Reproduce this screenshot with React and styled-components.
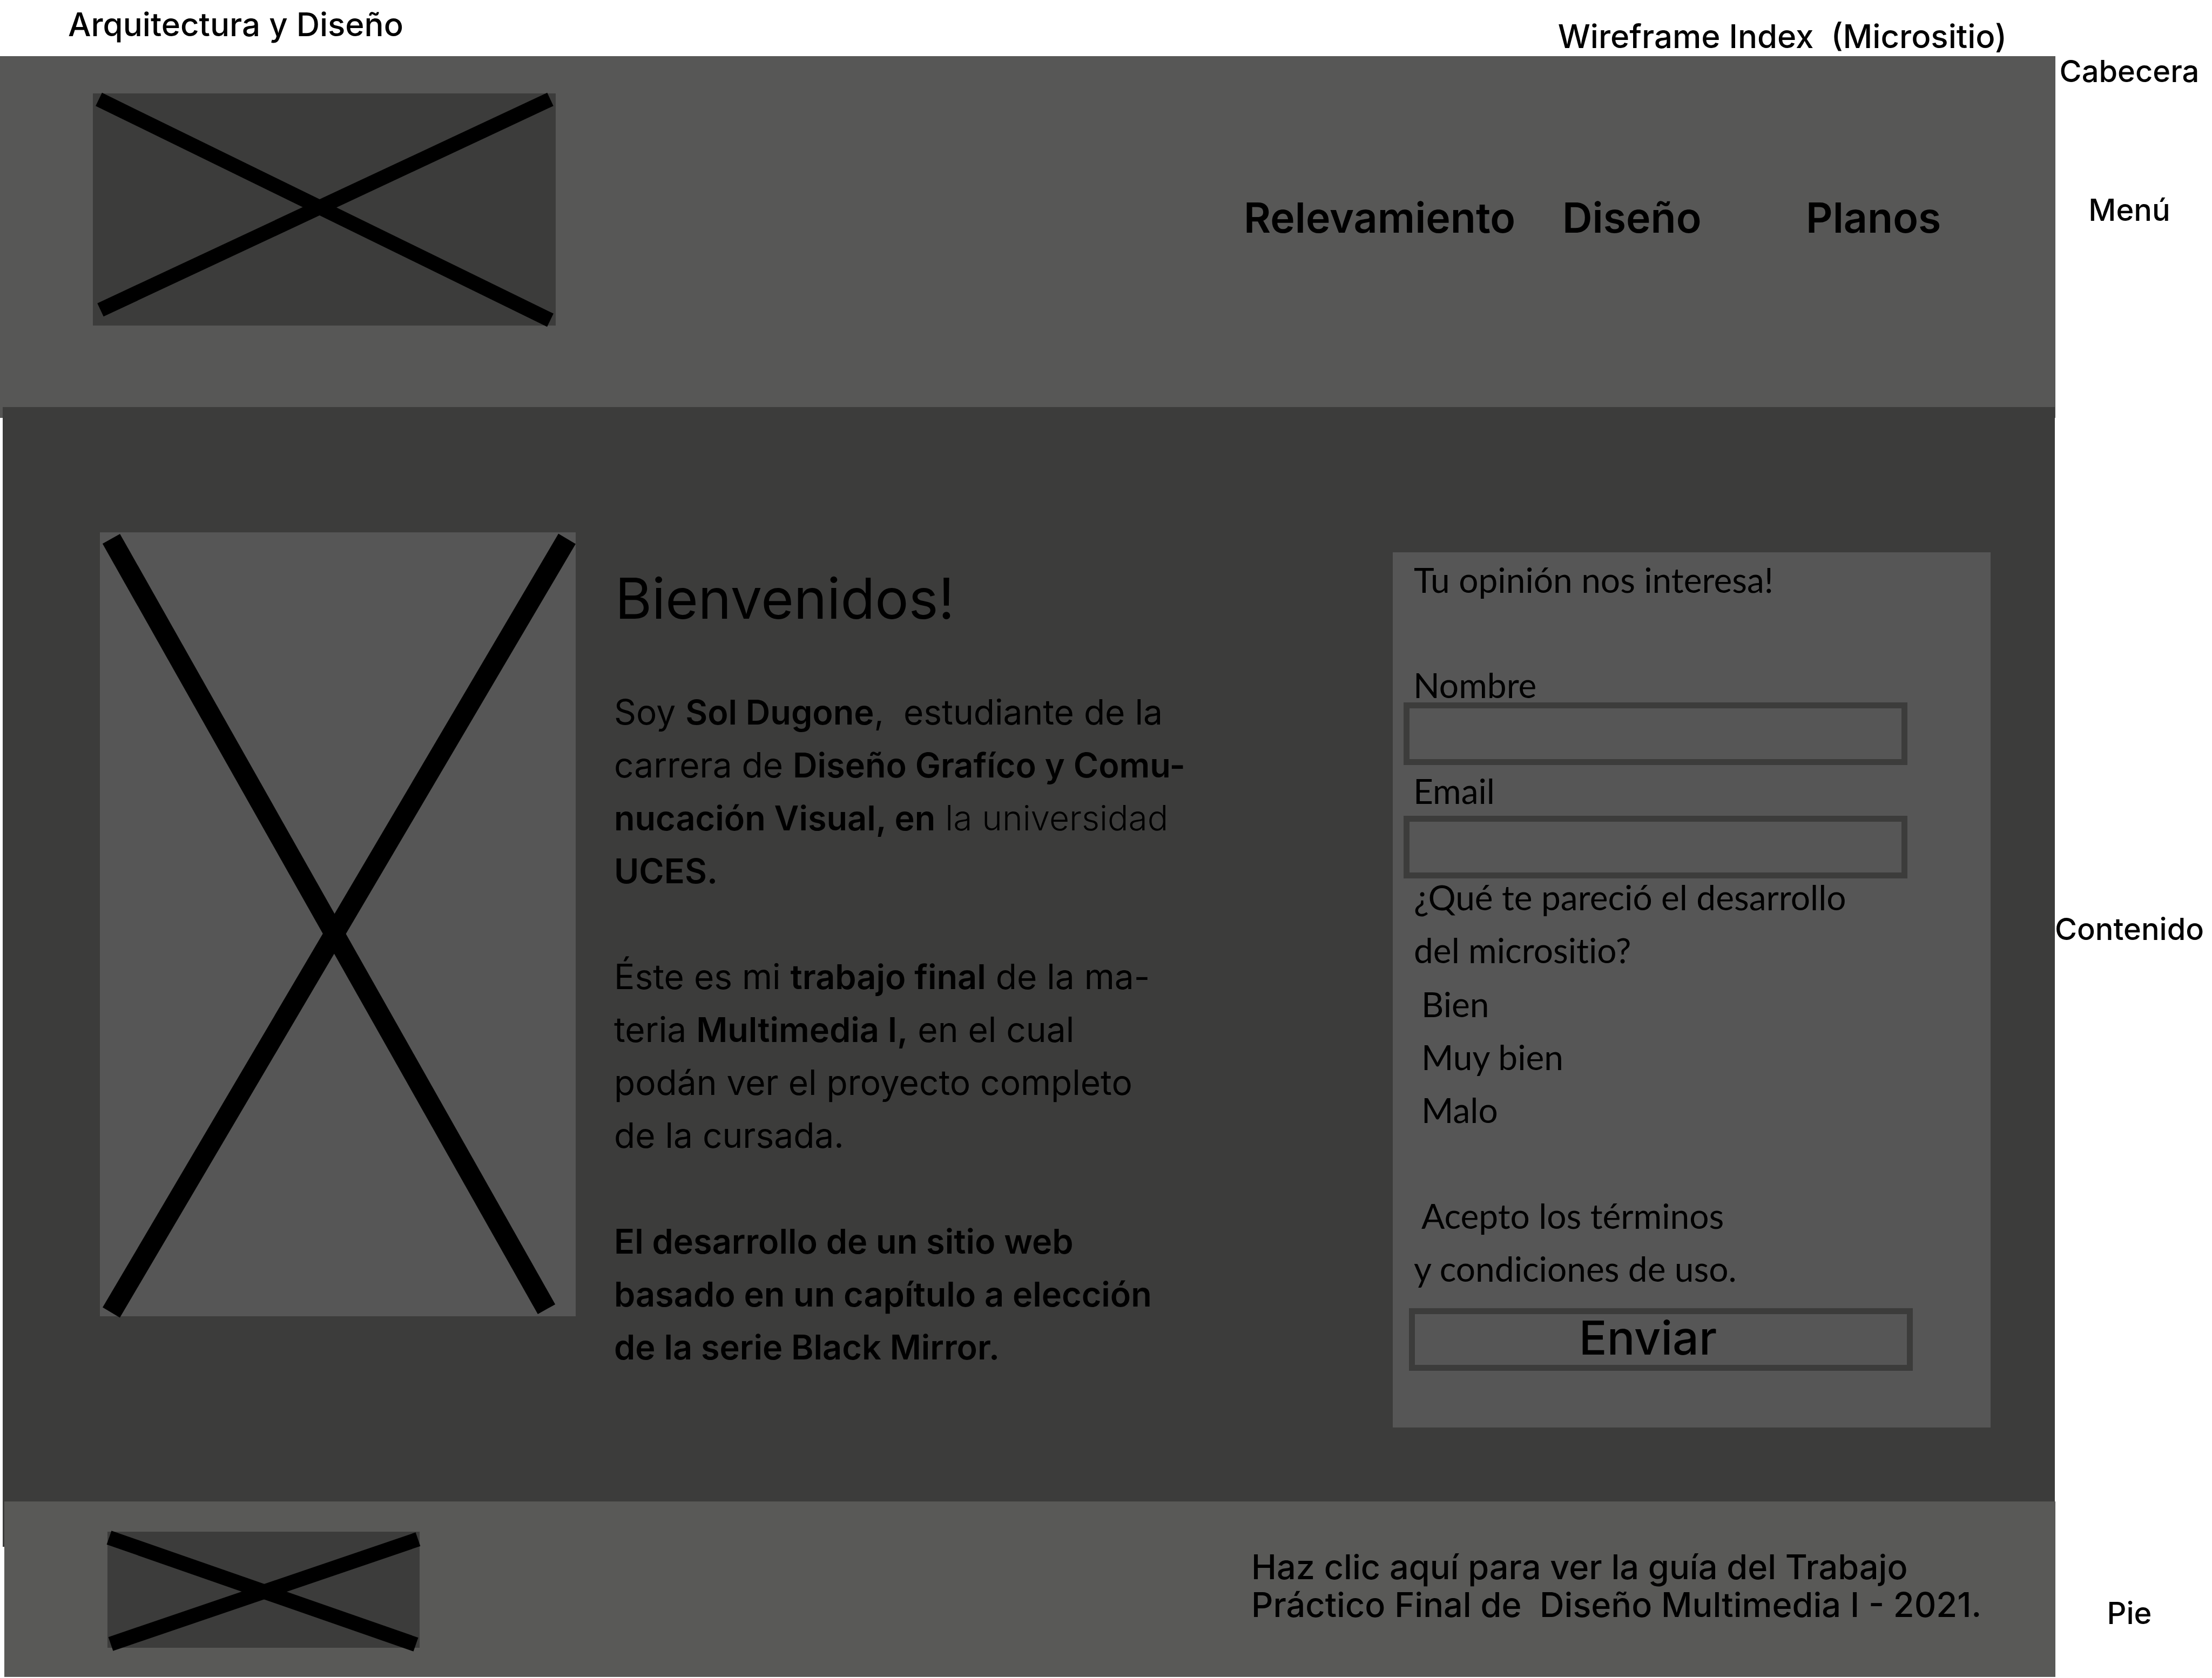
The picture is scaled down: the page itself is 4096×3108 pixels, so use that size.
import React from "react";
import styled, { createGlobalStyle } from "styled-components";

const GlobalStyle = createGlobalStyle`
  *, *::before, *::after { box-sizing: border-box; }
  body {
    margin: 0;
    background: #fff;
    color: #000;
    font-family: "Inter", "Liberation Sans", sans-serif;
  }
  h1, h2, p { margin: 0; }
`;

const TopBar = styled.div`
  display: flex;
  justify-content: space-between;
  height: 104px;
  padding: 8px 380px 0 126px;
`;

const TopTitle = styled.p`
  align-self: ${(p) => p.$align};
  font-size: 60px;
  font-weight: 500;
  line-height: 74px;
  white-space: pre;
`;

const Board = styled.div`
  display: grid;
  grid-template-columns: minmax(0, 1fr) 290px;
  padding-bottom: 2px;
`;

const Notes = styled.aside`
  display: flex;
  flex-direction: column;
  align-items: center;
  gap: 201px;
  padding: ${(p) => p.$top}px 16px 0 0;
`;

const Note = styled.p`
  font-size: 56px;
  font-weight: 500;
  line-height: 56px;
`;

const Header = styled.header`
  display: flex;
  justify-content: space-between;
  align-items: flex-start;
  margin-bottom: -20px;
  padding: 69px 0 171px 172px;
  background: #575756;
`;

const Nav = styled.nav`
  display: grid;
  grid-template-columns: 590px 451px 462px;
  padding-top: 184px;
`;

const NavLink = styled.a`
  justify-self: start;
  color: inherit;
  font-size: 77px;
  font-weight: 600;
  line-height: 92px;
  text-decoration: none;
`;

const Content = styled.main`
  display: flex;
  align-items: flex-start;
  gap: 71px;
  margin: 0 1px -84px 5px;
  padding: 232px 119px 221px 180px;
  background: #3c3c3b;
`;

const Picture = styled.svg`
  display: block;
  flex: none;
  overflow: visible;
  background: ${(p) => p.$fill};

  line {
    stroke: #000;
    stroke-width: ${(p) => p.$stroke}px;
  }
`;

const Intro = styled.article`
  padding-top: 60px;
`;

const Heading = styled.h1`
  margin-bottom: 100px;
  padding-left: 2px;
  font-size: 104px;
  font-weight: 400;
  line-height: 124px;
`;

const Paragraph = styled.p`
  font-size: 64px;
  line-height: 98px;
  white-space: nowrap;

  & + & { margin-top: 98px; }
  b {
    font-size: 63px;
    font-weight: 600;
  }
`;

const Light = styled.span`
  font-weight: 300;
`;

const Form = styled.form`
  display: flex;
  flex-direction: column;
  align-items: flex-start;
  width: 1107px;
  margin: 37px 0 0 auto;
  padding: 18px 0 105px 20px;
  background: #565656;
  font-family: "Lato", "Open Sans", sans-serif;
  font-size: 64px;
  font-variant-ligatures: none;
  line-height: 66px;
`;

const FormTitle = styled.h2`
  margin-bottom: 130px;
  padding-left: 19px;
  font-size: inherit;
  font-weight: 400;
`;

const Field = styled.div`
  display: flex;
  flex-direction: column;
  gap: ${(p) => p.$gap}px;
  margin-bottom: ${(p) => p.$after}px;

  label {
    padding-left: 18px;
    line-height: 64px;
  }
`;

const TextBox = styled.input`
  width: 933px;
  height: 116px;
  padding: 0 24px;
  border: 11px solid #3c3c3b;
  border-radius: 0;
  outline: none;
  background: transparent;
  color: inherit;
  font: inherit;
`;

const Options = styled.fieldset`
  display: flex;
  flex-direction: column;
  gap: 32px;
  min-width: 0;
  margin: 0;
  padding: 2px 0 0 19px;
  border: 0;
`;

const Question = styled.legend`
  display: grid;
  gap: 32px;
  margin-bottom: 32px;
  padding: 2px 0 0;
`;

const Choice = styled.input`
  appearance: none;
  width: 14px;
  height: 40px;
  margin: 0;

  &:checked { border-left: 6px solid #000; }
`;

const Terms = styled.label`
  margin: 114px 0 24px;
  padding-left: 19px;
  line-height: 98px;
`;

const Submit = styled.button`
  width: 933px;
  height: 116px;
  margin-left: 10px;
  padding: 0 48px 6px 0;
  border: 11px solid #3c3c3b;
  background: transparent;
  color: inherit;
  font: 500 86px/88px "Inter", "Liberation Sans", sans-serif;
`;

const Footer = styled.footer`
  display: flex;
  justify-content: space-between;
  align-items: flex-start;
  margin-left: 8px;
  padding: 56px 0 54px 191px;
  background: #595957;
`;

const GuideLink = styled.a`
  width: 1489px;
  padding-top: 30px;
  color: inherit;
  font-size: 63px;
  font-weight: 500;
  line-height: 70px;
  text-decoration: none;
`;

function Placeholder({ width, height, fill, stroke = 27, lines }) {
  return (
    <Picture width={width} height={height} $fill={fill} $stroke={stroke} aria-hidden="true">
      {lines.map(([x1, y1, x2, y2]) => (
        <line key={`${x1}-${y1}`} x1={x1} y1={y1} x2={x2} y2={y2} />
      ))}
    </Picture>
  );
}

const choices = ["Bien", "Muy bien", "Malo"];

export default function App() {
  return (
    <>
      <GlobalStyle />
      <TopBar>
        <TopTitle $align="flex-start">Arquitectura y Diseño</TopTitle>
        <TopTitle $align="flex-end">{"Wireframe Index  (Micrositio)"}</TopTitle>
      </TopBar>
      <Board>
        <Header>
          <Placeholder
            width={857}
            height={430}
            fill="#3c3c3b"
            lines={[[11, 11, 847, 420], [847, 11, 14, 401]]}
          />
          <Nav>
            <NavLink href="#relevamiento">Relevamiento</NavLink>
            <NavLink href="#diseno">Diseño</NavLink>
            <NavLink href="#planos">Planos</NavLink>
          </Nav>
        </Header>
        <Notes $top={0}>
          <Note>Cabecera</Note>
          <Note>Menú</Note>
        </Notes>

        <Content>
          <Placeholder
            width={881}
            height={1452}
            fill="#565656"
            stroke={37}
            lines={[[21, 12, 827, 1439], [865, 12, 21, 1445]]}
          />
          <Intro>
            <Heading>Bienvenidos!</Heading>
            <Paragraph>
              Soy <b>Sol Dugone</b>,&nbsp; estudiante de la<br />
              carrera de <b>Diseño Grafíco y Comu-<br />
              nucación Visual, en</b> <Light>la universidad</Light><br />
              <b>UCES.</b>
            </Paragraph>
            <Paragraph>
              Éste es mi <b>trabajo final</b> de la ma-<br />
              teria <b>Multimedia I,</b> en el cual<br />
              podán ver el proyecto completo<br />
              de la cursada.
            </Paragraph>
            <Paragraph>
              <b>
                El desarrollo de un sitio web<br />
                basado en un capítulo a elección<br />
                de la serie Black Mirror.
              </b>
            </Paragraph>
          </Intro>
          <Form onSubmit={(e) => e.preventDefault()}>
            <FormTitle>Tu opinión nos interesa!</FormTitle>
            <Field $gap={0} $after={16}>
              <label htmlFor="nombre">Nombre</label>
              <TextBox id="nombre" type="text" />
            </Field>
            <Field $gap={14} $after={0}>
              <label htmlFor="email">Email</label>
              <TextBox id="email" type="email" />
            </Field>
            <Options>
              <Question>
                <span>¿Qué te pareció el desarrollo</span>
                <span>del micrositio?</span>
              </Question>
              {choices.map((choice) => (
                <label key={choice}>
                  <Choice type="radio" name="opinion" value={choice} />
                  {choice}
                </label>
              ))}
            </Options>
            <Terms>
              <Choice type="checkbox" name="terminos" />
              Acepto los términos<br />
              y condiciones de uso.
            </Terms>
            <Submit type="submit">Enviar</Submit>
          </Form>
        </Content>
        <Notes $top={939}>
          <Note>Contenido</Note>
        </Notes>

        <Footer>
          <Placeholder
            width={578}
            height={215}
            fill="#3c3c3b"
            lines={[[3, 11, 571, 209], [575, 14, 6, 208]]}
          />
          <GuideLink href="#guia">
            Haz clic aquí para ver la guía del Trabajo<br />
            Práctico Final de&nbsp; Diseño Multimedia I - 2021.
          </GuideLink>
        </Footer>
        <Notes $top={179}>
          <Note>Pie</Note>
        </Notes>
      </Board>
    </>
  );
}
